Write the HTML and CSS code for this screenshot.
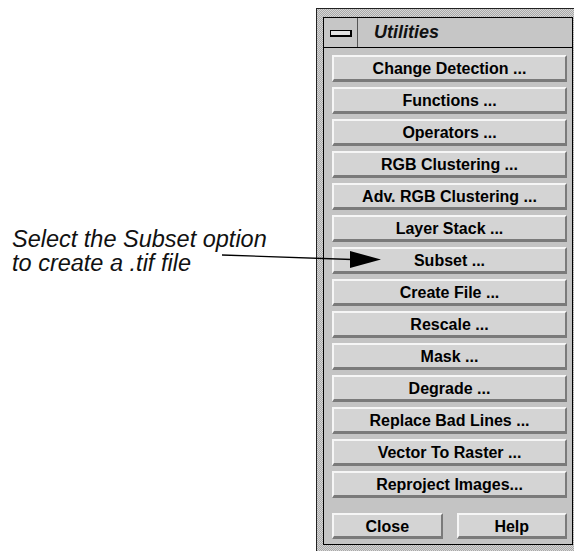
FILE: index.html
```html
<!DOCTYPE html>
<html>
<head>
<meta charset="utf-8">
<link rel="stylesheet" href="styles.css">
</head>
<body>

<div class="page">
  <div class="note">
    <p>Select the Subset option<br>to create a .tif file</p>
  </div>

  <div class="frame">
    <div class="window">
      <div class="titlebar">
        <div class="minbox"><span class="minicon"></span></div>
        <div class="title">Utilities</div>
      </div>
      <div class="menu">
        <button class="btn">Change Detection ...</button>
        <button class="btn">Functions ...</button>
        <button class="btn">Operators ...</button>
        <button class="btn">RGB Clustering ...</button>
        <button class="btn">Adv. RGB Clustering ...</button>
        <button class="btn">Layer Stack ...</button>
        <button class="btn">Subset ...</button>
        <button class="btn">Create File ...</button>
        <button class="btn">Rescale ...</button>
        <button class="btn">Mask ...</button>
        <button class="btn">Degrade ...</button>
        <button class="btn">Replace Bad Lines ...</button>
        <button class="btn">Vector To Raster ...</button>
        <button class="btn">Reproject Images...</button>
        <div class="actions">
          <button class="btn">Close</button>
          <button class="btn">Help</button>
        </div>
      </div>
    </div>
  </div>
</div>

<svg class="pointer" width="574" height="551" viewBox="0 0 574 551">
  <line x1="222" y1="255" x2="352" y2="259.5" stroke="#000" stroke-width="1.3"/>
  <polygon points="350,251 381,259.5 350,268" fill="#000"/>
</svg>

</body>
</html>
```

FILE: styles.css
```css
html, body {
  margin: 0;
  padding: 0;
}

body {
  width: 574px;
  height: 551px;
  overflow: hidden;
  background-color: #fff;
  position: relative;
  font-family: "Liberation Sans", Arial, sans-serif;
}

.page {
  display: flex;
  align-items: flex-start;
}

.note {
  width: 316px;
  flex: none;
}

.note p {
  margin: 227px 0 0 12px;
  font-style: italic;
  font-size: 23.5px;
  line-height: 24px;
  color: #111;
}

/* stippled outer window frame */
.frame {
  flex: none;
  margin-top: 8px;
  width: 250px;
  border: 1px solid #222;
  padding: 8px 7px 6px 6px;
  background-color: #c2c2c2;
  background-image: repeating-conic-gradient(#a9a9a9 0 25%, #d6d6d6 0 50%);
  background-size: 2px 2px;
}

.window {
  border: 1px solid #000;
  background-color: #c4c4c4;
}

.titlebar {
  display: flex;
  height: 29px;
  border-bottom: 1px solid #000;
  background-color: #c6c6c6;
}

.minbox {
  width: 33px;
  border-right: 1px solid #555;
  display: flex;
  align-items: center;
  justify-content: center;
}

.minicon {
  display: block;
  width: 19px;
  height: 4px;
  border: 1px solid #000;
  border-right-width: 2px;
  border-bottom-width: 2px;
  background-color: #e2e2e2;
  margin-top: 2px;
}

.title {
  padding-left: 16px;
  font-weight: bold;
  font-style: italic;
  font-size: 18px;
  line-height: 29px;
  color: #111;
}

.menu {
  display: flex;
  flex-direction: column;
  gap: 5px;
  padding: 7px 5px 5px 8px;
}

.btn {
  box-sizing: border-box;
  height: 27px;
  margin: 0;
  padding: 2px 0 0;
  border: 2px solid;
  border-color: #f6f6f6 #7a7a7a #7a7a7a #f6f6f6;
  border-bottom-width: 3px;
  background-color: #d4d4d4;
  font-family: "Liberation Sans", Arial, sans-serif;
  font-weight: bold;
  font-size: 16px;
  color: #000;
  text-align: center;
}

.actions {
  display: flex;
  gap: 14px;
  margin-top: 10px;
}

.actions .btn {
  flex: 1;
  height: 26px;
}

.pointer {
  position: absolute;
  left: 0;
  top: 0;
}
```
